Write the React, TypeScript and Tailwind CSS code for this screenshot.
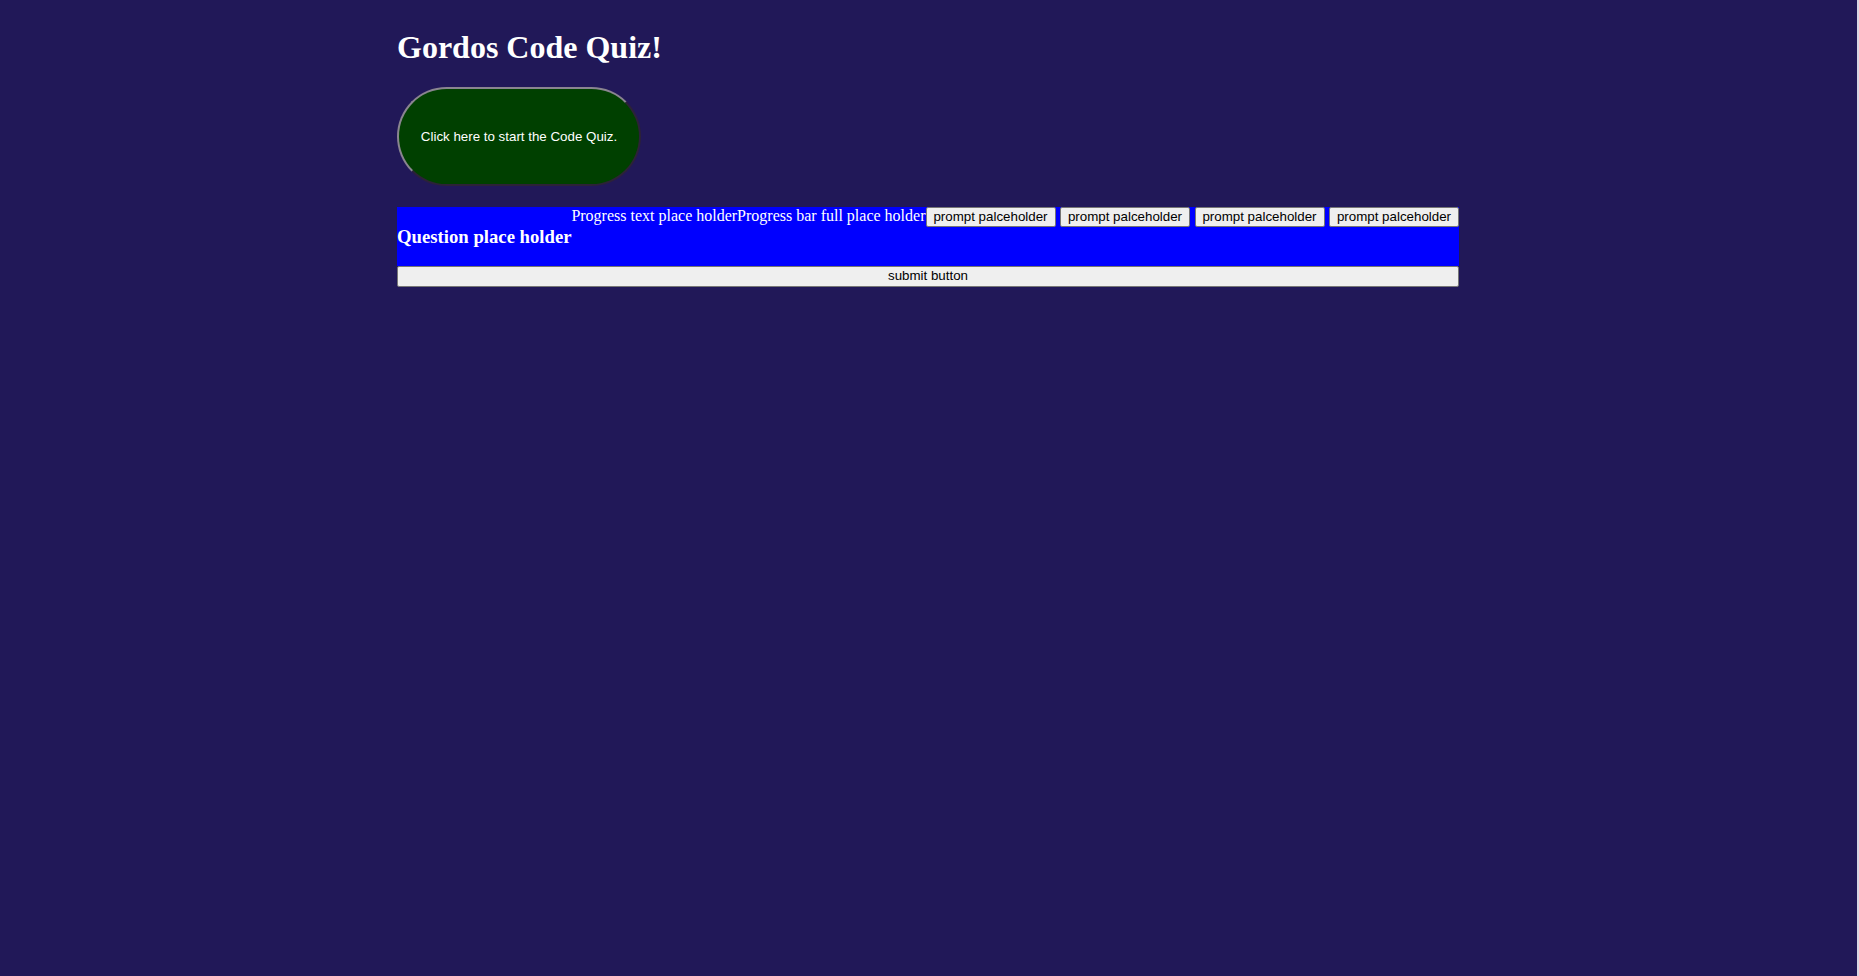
import React from "react";

export default function App() {
  const prompts = ["prompt palceholder", "prompt palceholder", "prompt palceholder", "prompt palceholder"];
  const btn =
    "h-[20px] px-[6px] bg-[#efefef] border border-[#767676] rounded-[2px] text-[13.33px] leading-[16px] text-black font-['Liberation_Sans',Arial,sans-serif] whitespace-nowrap";
  return (
    <div className="min-h-screen w-full flex bg-[#211858]">
      <div className="flex-1 pt-[8px]">
        <div className="ml-[397px] w-[1062px] font-['Liberation_Serif','Times_New_Roman',serif] text-white">
          <h1 className="text-[32px] font-bold leading-[37px] mt-[20.5px] mb-[21.5px]">Gordos Code Quiz!</h1>
          <button className="w-[244px] h-[99px] rounded-full bg-[#004000] border-2 border-solid border-t-[#8a8590] border-l-[#8a8590] border-r-[#2c2238] border-b-[#2c2238] text-white text-[13.33px] font-['Liberation_Sans',Arial,sans-serif] mb-[20.5px]">
            Click here to start the Code Quiz.
          </button>
          <div className="bg-[#0000ff]">
            <div className="flex justify-end items-baseline h-[20px]">
              <span className="text-[16px] leading-[18px] whitespace-nowrap">Progress text place holder</span>
              <span className="text-[16px] leading-[18px] whitespace-nowrap">Progress bar full place holder</span>
              <div className="flex items-baseline gap-[4.5px]">
                {prompts.map((p, i) => (
                  <button key={i} className={btn + " w-[130px]"}>
                    {p}
                  </button>
                ))}
              </div>
            </div>
            <h3 className="text-[18.72px] font-bold leading-[20px] pb-[19px]">Question place holder</h3>
          </div>
          <button className={btn + " w-full h-[21px] block"}>submit button</button>
        </div>
      </div>
      <div className="w-[2px] bg-[#d8d6e2]" />
    </div>
  );
}
